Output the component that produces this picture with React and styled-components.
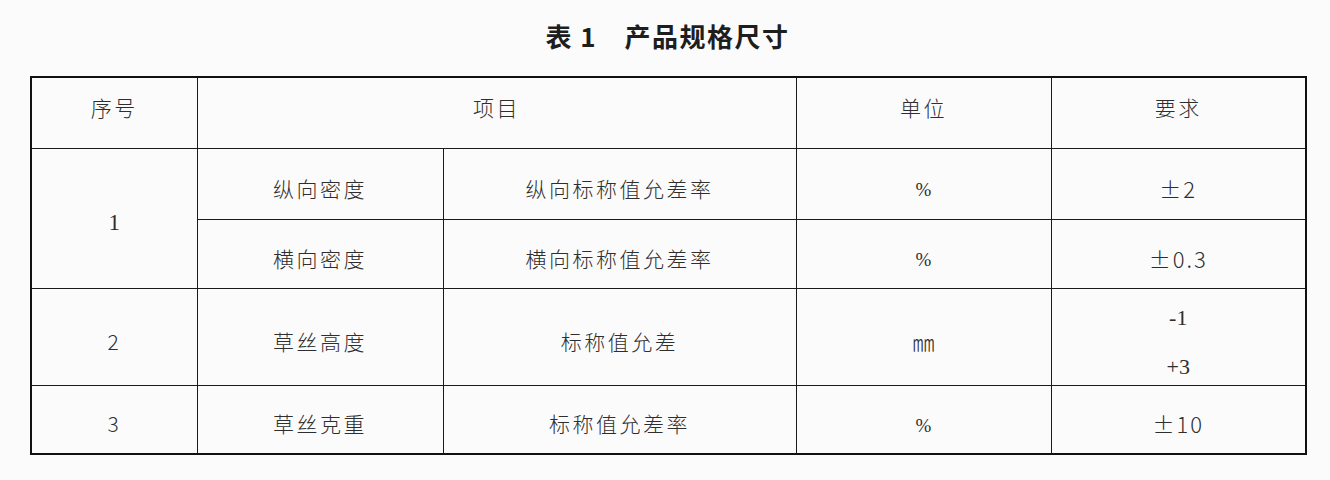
import React from "react";
import styled, { createGlobalStyle } from "styled-components";

const Global = createGlobalStyle`
  html, body { margin: 0; padding: 0; background: #fcfbfc; }
  body { font-family: "Noto Sans CJK SC", "Noto Sans", sans-serif; color: #2b2b2b; }
`;

const Page = styled.div`
  width: 1330px;
  height: 480px;
  box-sizing: border-box;
  padding: 0 25px 0 30px;
  background: #fcfbfc;
`;

const Title = styled.div`
  height: 76px;
  box-sizing: border-box;
  padding-bottom: 6px;
  display: flex;
  align-items: center;
  justify-content: center;
  font-family: "Noto Sans CJK SC", sans-serif;
  font-weight: 700;
  font-size: 26px;
  letter-spacing: 1.5px;
  color: #1e1e1e;
  white-space: pre;
`;

const Table = styled.table`
  width: 1275px;
  table-layout: fixed;
  border-collapse: collapse;
  border: 2.5px solid #111;
`;

const Row = styled.tr`
  height: ${(p) => p.$h}px;
`;

const Cell = styled.td`
  border: 1.5px solid #1a1a1a;
  padding: ${(p) => (p.$head ? "0 0 10px" : "9px 0 0")};
  text-align: center;
  vertical-align: middle;
  font-family: ${(p) =>
    p.$serif
      ? '"Liberation Serif", "Noto Sans CJK SC", serif'
      : '"Noto Sans CJK SC", "Noto Sans", sans-serif'};
  font-size: ${(p) => (p.$serif ? 23 : 21)}px;
  letter-spacing: ${(p) => (p.$serif ? 0 : 2.5)}px;
  font-weight: 300;
  color: #2e2e2e;
  line-height: 1;
`;

const Unit = styled.span`
  font-family: "Liberation Serif", serif;
  font-size: 19px;
  letter-spacing: 0;
`;

const MM = styled.span`
  font-family: "Noto Sans CJK SC", sans-serif;
  font-size: 22px;
  letter-spacing: 0;
`;

const Stack = styled.div`
  display: flex;
  flex-direction: column;
  align-items: center;
  gap: 27px;
  padding-top: 2px;
  font-family: "Liberation Serif", serif;
  font-size: 22px;
  letter-spacing: 0;
`;

const Tol = styled.span`
  font-family: "Noto Sans CJK SC", sans-serif;
  font-size: 22px;
  letter-spacing: 2px;
`;

export default function App() {
  return (
    <>
      <Global />
      <Page>
        <Title>{"表 1　产品规格尺寸"}</Title>
        <Table>
          <colgroup>
            <col style={{ width: 166 }} />
            <col style={{ width: 246 }} />
            <col style={{ width: 353 }} />
            <col style={{ width: 255 }} />
            <col style={{ width: 255 }} />
          </colgroup>
          <tbody>
            <Row $h={71}>
              <Cell $head>序号</Cell>
              <Cell $head colSpan={2}>项目</Cell>
              <Cell $head>单位</Cell>
              <Cell $head>要求</Cell>
            </Row>
            <Row $h={71}>
              <Cell rowSpan={2} $serif>1</Cell>
              <Cell>纵向密度</Cell>
              <Cell>纵向标称值允差率</Cell>
              <Cell><Unit>%</Unit></Cell>
              <Cell><Tol>±2</Tol></Cell>
            </Row>
            <Row $h={69}>
              <Cell>横向密度</Cell>
              <Cell>横向标称值允差率</Cell>
              <Cell><Unit>%</Unit></Cell>
              <Cell><Tol>±0.3</Tol></Cell>
            </Row>
            <Row $h={97}>
              <Cell>2</Cell>
              <Cell>草丝高度</Cell>
              <Cell>标称值允差</Cell>
              <Cell><MM>㎜</MM></Cell>
              <Cell>
                <Stack>
                  <span>-1</span>
                  <span>+3</span>
                </Stack>
              </Cell>
            </Row>
            <Row $h={69}>
              <Cell>3</Cell>
              <Cell>草丝克重</Cell>
              <Cell>标称值允差率</Cell>
              <Cell><Unit>%</Unit></Cell>
              <Cell><Tol>±10</Tol></Cell>
            </Row>
          </tbody>
        </Table>
      </Page>
    </>
  );
}
